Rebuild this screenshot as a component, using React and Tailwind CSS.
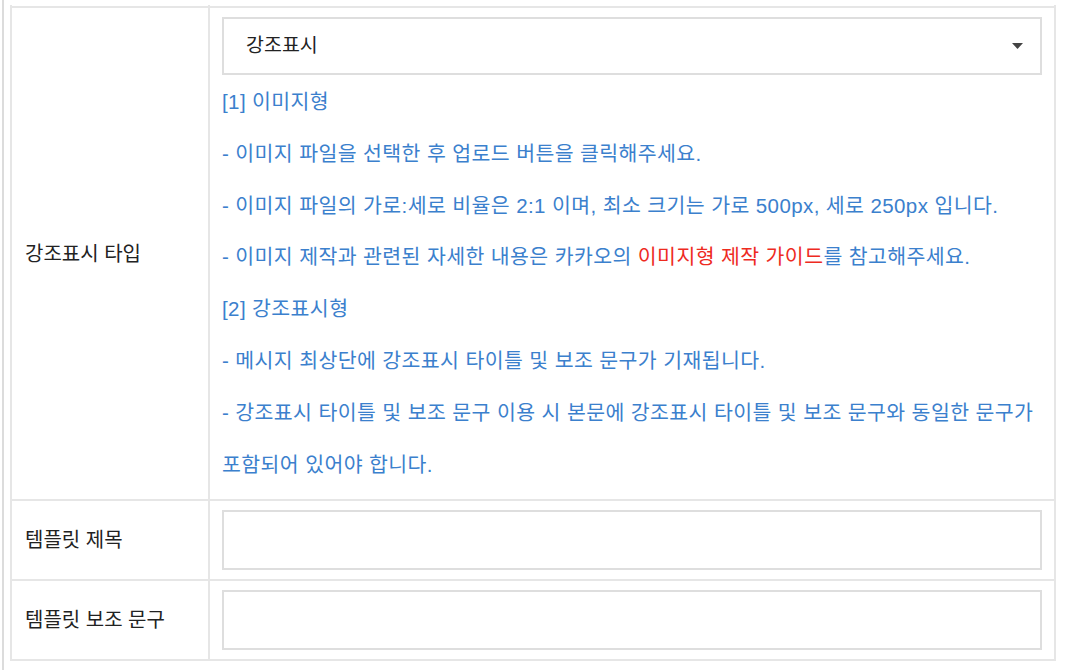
import React from 'react';

const font = { fontFamily: '"Liberation Sans", "Noto Sans CJK KR", sans-serif' };

function Row({ label, children, className = '' }) {
  return (
    <div className={`flex border-t-2 border-[#e6e6e6] ${className}`}>
      <div className="w-[198px] shrink-0 flex items-center pl-[13px] text-[20px] text-[#222] border-r-2 border-[#e6e6e6]">
        {label}
      </div>
      <div className="flex-1 px-[12px]">{children}</div>
    </div>
  );
}

function TextBox() {
  return <div className="h-[60px] border-2 border-[#dedede] bg-white" />;
}

export default function App() {
  const lines = [
    '[1] 이미지형',
    '- 이미지 파일을 선택한 후 업로드 버튼을 클릭해주세요.',
    '- 이미지 파일의 가로:세로 비율은 2:1 이며, 최소 크기는 가로 500px, 세로 250px 입니다.',
  ];

  return (
    <div style={font} className="w-[1068px] h-[670px] bg-white overflow-hidden">
      <div className="ml-[2px] h-full border-l-2 border-[#dcdcdc] pl-[6px] pt-[6px]">
        <div className="w-[1046px] border-x-2 border-b-2 border-[#e6e6e6]">
          {/* top stub row */}
          <div className="flex h-[1px] -mt-[1px]">
            <div className="w-[198px] border-r-2 border-[#e6e6e6]" />
          </div>

          <Row label="강조표시 타입">
            <div className="pt-[9px] pb-[9px]">
              <div className="relative h-[58px] border-2 border-[#dedede] flex items-center pl-[22px] text-[19.5px] text-[#222]">
                강조표시
                <svg className="absolute right-[17px] top-[24px]" width="11" height="6" viewBox="0 0 11 6">
                  <path d="M0 0 L11 0 L5.5 6 Z" fill="#444" />
                </svg>
              </div>
              <div className="text-[20.5px] tracking-[0.4px] leading-[51.8px] text-[#3b80cd] mt-[1px] break-keep">
                {lines.map((l) => (
                  <div key={l}>{l}</div>
                ))}
                <div>
                  - 이미지 제작과 관련된 자세한 내용은 카카오의{' '}
                  <span className="text-[#ee2b1f]">이미지형 제작 가이드</span>를 참고해주세요.
                </div>
                <div>[2] 강조표시형</div>
                <div>- 메시지 최상단에 강조표시 타이틀 및 보조 문구가 기재됩니다.</div>
                <div>
                  - 강조표시 타이틀 및 보조 문구 이용 시 본문에 강조표시 타이틀 및 보조 문구와 동일한 문구가 포함되어
                  있어야 합니다.
                </div>
              </div>
            </div>
          </Row>

          <Row label="템플릿 제목">
            <div className="py-[9px]">
              <TextBox />
            </div>
          </Row>

          <Row label="템플릿 보조 문구">
            <div className="py-[9px]">
              <TextBox />
            </div>
          </Row>
        </div>
      </div>
    </div>
  );
}
